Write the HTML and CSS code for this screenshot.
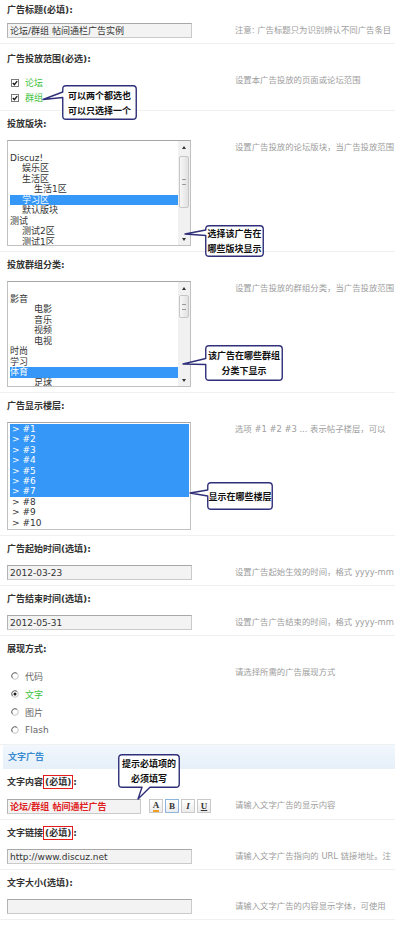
FILE: index.html
```html
<!DOCTYPE html>
<html lang="zh-CN">
<head>
<meta charset="utf-8">
<title>广告设置</title>
<link rel="stylesheet" href="styles.css">
</head>
<body>
<div class="page">

  <div class="row row--first">
    <div class="label">广告标题(必填):</div>
    <div class="field-row">
      <div class="field"><input class="input" type="text" value="论坛/群组 帖间通栏广告实例"></div>
      <div class="note">注意: 广告标题只为识别辨认不同广告条目</div>
    </div>
  </div>

  <div class="row row--checks">
    <div class="label">广告投放范围(必选):</div>
    <div class="field-row">
      <div class="field">
        <ul class="choices choices--check">
          <li class="choice"><svg class="mark" viewBox="0 0 8 8"><rect x=".5" y=".5" width="7" height="7" fill="#fff" stroke="#7a7a7a"/><path d="M1.8,3.9 L3.4,5.6 L6.2,2.1" stroke="#1e1e1e" stroke-width="1.4" fill="none"/></svg><span class="green">论坛</span></li>
          <li class="choice"><svg class="mark" viewBox="0 0 8 8"><rect x=".5" y=".5" width="7" height="7" fill="#fff" stroke="#7a7a7a"/><path d="M1.8,3.9 L3.4,5.6 L6.2,2.1" stroke="#1e1e1e" stroke-width="1.4" fill="none"/></svg><span class="green">群组</span></li>
        </ul>
      </div>
      <div class="note">设置本广告投放的页面或论坛范围</div>
    </div>
  </div>

  <div class="row">
    <div class="label">投放版块:</div>
    <div class="field-row">
      <div class="field">
        <div class="listbox listbox--forum">
          <div class="options">
            <div class="opt">&nbsp;</div>
            <div class="opt">Discuz!</div>
            <div class="opt l1">娱乐区</div>
            <div class="opt l1">生活区</div>
            <div class="opt l2">生活1区</div>
            <div class="opt l1 sel">学习区</div>
            <div class="opt l1">默认版块</div>
            <div class="opt">测试</div>
            <div class="opt l1">测试2区</div>
            <div class="opt l1">测试1区</div>
          </div>
          <div class="scrollbar">
            <div class="sb-arrow"></div>
            <div class="sb-gap sb-gap--forum"></div>
            <div class="sb-thumb sb-thumb--forum"></div>
            <div class="sb-space"></div>
            <div class="sb-arrow sb-arrow--down"></div>
          </div>
        </div>
      </div>
      <div class="note">设置广告投放的论坛版块，当广告投放范围</div>
    </div>
  </div>

  <div class="row">
    <div class="label">投放群组分类:</div>
    <div class="field-row">
      <div class="field">
        <div class="listbox listbox--group">
          <div class="options">
            <div class="opt">&nbsp;</div>
            <div class="opt">影音</div>
            <div class="opt l2">电影</div>
            <div class="opt l2">音乐</div>
            <div class="opt l2">视频</div>
            <div class="opt l2">电视</div>
            <div class="opt">时尚</div>
            <div class="opt">学习</div>
            <div class="opt sel">体育</div>
            <div class="opt l2">足球</div>
          </div>
          <div class="scrollbar">
            <div class="sb-arrow"></div>
            <div class="sb-gap sb-gap--group"></div>
            <div class="sb-thumb sb-thumb--group"></div>
            <div class="sb-space"></div>
            <div class="sb-arrow sb-arrow--down"></div>
          </div>
        </div>
      </div>
      <div class="note">设置广告投放的群组分类，当广告投放范围</div>
    </div>
  </div>

  <div class="row">
    <div class="label">广告显示楼层:</div>
    <div class="field-row">
      <div class="field">
        <div class="listbox listbox--floor">
          <div class="options options--floor">
            <div class="opt sel">&gt; #1</div>
            <div class="opt sel">&gt; #2</div>
            <div class="opt sel">&gt; #3</div>
            <div class="opt sel">&gt; #4</div>
            <div class="opt sel">&gt; #5</div>
            <div class="opt sel">&gt; #6</div>
            <div class="opt sel">&gt; #7</div>
            <div class="opt">&gt; #8</div>
            <div class="opt">&gt; #9</div>
            <div class="opt">&gt; #10</div>
          </div>
        </div>
      </div>
      <div class="note">选项 #1 #2 #3 ... 表示帖子楼层，可以</div>
    </div>
  </div>

  <div class="row">
    <div class="label">广告起始时间(选填):</div>
    <div class="field-row">
      <div class="field"><input class="input" type="text" value="2012-03-23"></div>
      <div class="note">设置广告起始生效的时间，格式 yyyy-mm</div>
    </div>
  </div>

  <div class="row">
    <div class="label">广告结束时间(选填):</div>
    <div class="field-row">
      <div class="field"><input class="input" type="text" value="2012-05-31"></div>
      <div class="note">设置广告广告结束的时间，格式 yyyy-mm</div>
    </div>
  </div>

  <div class="row">
    <div class="label">展现方式:</div>
    <div class="field-row">
      <div class="field">
        <ul class="choices choices--radio">
          <li class="choice"><svg class="mark" viewBox="0 0 8 8"><circle cx="4" cy="4" r="3.3" fill="#fff" stroke="#c4c4c4"/><path d="M1.3,5.9 A3.3,3.3 0 0 1 5.9,1.3" stroke="#6a6a6a" fill="none"/></svg><span>代码</span></li>
          <li class="choice"><svg class="mark" viewBox="0 0 8 8"><circle cx="4" cy="4" r="3.3" fill="#fff" stroke="#c4c4c4"/><path d="M1.3,5.9 A3.3,3.3 0 0 1 5.9,1.3" stroke="#6a6a6a" fill="none"/><circle cx="4" cy="4" r="1.5" fill="#1e1e1e"/></svg><span class="green">文字</span></li>
          <li class="choice"><svg class="mark" viewBox="0 0 8 8"><circle cx="4" cy="4" r="3.3" fill="#fff" stroke="#c4c4c4"/><path d="M1.3,5.9 A3.3,3.3 0 0 1 5.9,1.3" stroke="#6a6a6a" fill="none"/></svg><span>图片</span></li>
          <li class="choice"><svg class="mark" viewBox="0 0 8 8"><circle cx="4" cy="4" r="3.3" fill="#fff" stroke="#c4c4c4"/><path d="M1.3,5.9 A3.3,3.3 0 0 1 5.9,1.3" stroke="#6a6a6a" fill="none"/></svg><span>Flash</span></li>
        </ul>
      </div>
      <div class="note">请选择所需的广告展现方式</div>
    </div>
  </div>

  <div class="section-head">文字广告</div>

  <div class="row">
    <div class="label">文字内容<span class="req">(必填)</span>:</div>
    <div class="field-row">
      <div class="field editor">
        <input class="input input--short" type="text" value="论坛/群组 帖间通栏广告">
        <div class="tools">
          <span class="tool"><span class="tool-a">A</span></span>
          <span class="tool tool--on">B</span>
          <span class="tool tool--i">I</span>
          <span class="tool tool--u">U</span>
        </div>
      </div>
      <div class="note">请输入文字广告的显示内容</div>
    </div>
  </div>

  <div class="row">
    <div class="label">文字链接<span class="req">(必填)</span>:</div>
    <div class="field-row">
      <div class="field"><input class="input" type="text" value="http://www.discuz.net"></div>
      <div class="note">请输入文字广告指向的 URL 链接地址。注</div>
    </div>
  </div>

  <div class="row">
    <div class="label">文字大小(选填):</div>
    <div class="field-row">
      <div class="field"><input class="input" type="text" value=""></div>
      <div class="note">请输入文字广告的内容显示字体，可使用</div>
    </div>
  </div>

  <div class="callout callout--1">
    <svg class="bubble" width="75" height="35" viewBox="0 0 75 35"><path d="M4,.75 H71 Q74.25,.75 74.25,4 V31 Q74.25,34.25 71,34.25 H4 Q.75,34.25 .75,31 V12.5 L-19,14.5 L.75,7 V4 Q.75,.75 4,.75 Z"/></svg>
    <div class="callout-text"><span>可以两个都选也</span><span>可以只选择一个</span></div>
  </div>

  <div class="callout callout--2">
    <svg class="bubble" width="59" height="32" viewBox="0 0 59 32"><path d="M4,.75 H55 Q58.25,.75 58.25,4 V28 Q58.25,31.25 55,31.25 H4 Q.75,31.25 .75,28 V10.5 L-20,9 L.75,5 V4 Q.75,.75 4,.75 Z"/></svg>
    <div class="callout-text"><span>选择该广告在</span><span>哪些版块显示</span></div>
  </div>

  <div class="callout callout--3">
    <svg class="bubble" width="78" height="36" viewBox="0 0 78 36"><path d="M4,.75 H74 Q77.25,.75 77.25,4 V32 Q77.25,35.25 74,35.25 H4 Q.75,35.25 .75,32 V19.5 L-22,19 L.75,13.5 V4 Q.75,.75 4,.75 Z"/></svg>
    <div class="callout-text"><span>该广告在哪些群组</span><span>分类下显示</span></div>
  </div>

  <div class="callout callout--4">
    <svg class="bubble" width="66" height="28" viewBox="0 0 66 28"><path d="M4,.75 H62 Q65.25,.75 65.25,4 V24 Q65.25,27.25 62,27.25 H4 Q.75,27.25 .75,24 V14 L-17,11 L.75,8 V4 Q.75,.75 4,.75 Z"/></svg>
    <div class="callout-text"><span>显示在哪些楼层</span></div>
  </div>

  <div class="callout callout--5">
    <svg class="bubble" width="62" height="34" viewBox="0 0 62 34"><path d="M4,.75 H58 Q61.25,.75 61.25,4 V30 Q61.25,33.25 58,33.25 H32 L20,45 L24,33.25 H4 Q.75,33.25 .75,30 V4 Q.75,.75 4,.75 Z"/></svg>
    <div class="callout-text"><span>提示必填项的</span><span>必须填写</span></div>
  </div>

</div>
</body>
</html>
```

FILE: styles.css
```css
* {
  box-sizing: border-box;
}

html,
body {
  margin: 0;
  padding: 0;
  background: #fff;
}

body {
  width: 395px;
  height: 925px;
  overflow: hidden;
  font-family: "DejaVu Sans", "Noto Sans CJK SC", sans-serif;
  font-size: 9px;
  color: #333;
}

.page {
  position: relative;
}

/* rows */
.row {
  padding: 5px 0 5px 7px;
  border-bottom: 1px solid #f0f0f0;
}

.row--first {
  padding-top: 2px;
}

.row--first .label {
  margin-bottom: 5px;
}

.row--checks {
  padding-top: 7px;
}

.row--checks .label {
  margin-bottom: 6px;
}

.label {
  height: 16px;
  line-height: 16px;
  margin-bottom: 8px;
  font-weight: bold;
  color: #333;
  white-space: nowrap;
}

.req {
  border: 1px solid #e31b1b;
  padding: 1px 1px;
}

.field-row {
  display: flex;
  align-items: flex-start;
}

.field {
  width: 228px;
  flex: none;
}

.note {
  font-size: 8.4px;
  line-height: 15px;
  color: #9d9d9d;
  white-space: nowrap;
}

/* text inputs */
.input {
  display: block;
  width: 185px;
  height: 15px;
  margin: 0;
  padding: 0 2px;
  border: 1px solid #cacaca;
  border-top-color: #a8a8a8;
  border-left-color: #b4b4b4;
  background: #f3f3f3;
  font-family: "DejaVu Sans", "Noto Sans CJK SC", sans-serif;
  font-size: 9px;
  color: #333;
  outline: none;
}

.input--short {
  width: 134px;
  color: #e01f1f;
  font-weight: bold;
}

/* checkbox / radio lists */
.choices {
  list-style: none;
  margin: 2px 0 0;
  padding: 0;
}

.choice {
  display: flex;
  align-items: center;
  gap: 6px;
  height: 15px;
  padding-left: 4px;
  color: #666;
}

.choices--radio .choice {
  height: 18px;
}

.mark {
  width: 8px;
  height: 8px;
  flex: none;
}

.green {
  color: #3cc23c;
}

/* list boxes */
.listbox {
  display: flex;
  width: 184px;
  border: 1px solid #c0c0c0;
  border-top-color: #a6a6a6;
  background: #fff;
}

.listbox--forum,
.listbox--group {
  height: 106px;
}

.listbox--floor {
  height: 108px;
}

.options {
  flex: 1;
  padding: 1px 0 0 2px;
  overflow: hidden;
}

.options--floor {
  padding: 1px 1px 0 2px;
}

.options--floor .opt {
  height: 10.4px;
  line-height: 10.4px;
  padding-left: 2px;
}

.opt {
  height: 10.5px;
  line-height: 10.5px;
  white-space: nowrap;
  color: #333;
}

.opt.sel {
  background: #3597f8;
  color: #fff;
}

.opt.l1 {
  padding-left: 12px;
}

.opt.l2 {
  padding-left: 24px;
}

.scrollbar {
  width: 12px;
  flex: none;
  display: flex;
  flex-direction: column;
  background: #f1f1f1;
}

.sb-arrow {
  height: 12px;
  flex: none;
  display: flex;
  align-items: center;
  justify-content: center;
}

.sb-arrow::before {
  content: "";
  border-left: 2.5px solid transparent;
  border-right: 2.5px solid transparent;
  border-bottom: 3px solid #333;
}

.sb-arrow--down::before {
  border-bottom: 0;
  border-top: 3px solid #333;
}

.sb-gap--forum {
  height: 3px;
}

.sb-gap--group {
  height: 1px;
}

.sb-thumb {
  margin: 0 1px;
  flex: none;
  border: 1px solid #c6c6c6;
  border-radius: 2px;
  background: linear-gradient(to right, #f7f7f7, #e1e1e1);
  display: flex;
  align-items: center;
  justify-content: center;
}

.sb-thumb::after {
  content: "";
  width: 4px;
  height: 4px;
  border-top: 1px solid #9a9a9a;
  border-bottom: 1px solid #9a9a9a;
}

.sb-thumb--forum {
  height: 52px;
}

.sb-thumb--group {
  height: 23px;
}

.sb-space {
  flex: 1;
}

/* section header */
.section-head {
  height: 24px;
  line-height: 24px;
  margin-left: 3px;
  padding-left: 5px;
  background: linear-gradient(#f1f7fc, #e6f0f9);
  color: #3a8bd2;
  font-weight: bold;
}

/* text editor buttons */
.editor {
  display: flex;
  align-items: center;
  height: 16px;
}

.tools {
  display: flex;
  gap: 2px;
  margin-left: 8px;
}

.tool {
  width: 14px;
  height: 14px;
  border: 1px solid #c9c9c9;
  background: linear-gradient(#ffffff, #ebebeb);
  display: flex;
  align-items: center;
  justify-content: center;
  font-family: "Liberation Serif", serif;
  font-weight: bold;
  font-size: 9px;
  color: #333;
}

.tool--on {
  border-color: #8fb4de;
}

.tool--i {
  font-style: italic;
}

.tool--u {
  text-decoration: underline;
}

.tool-a {
  line-height: 9px;
  border-bottom: 2px solid #f2a024;
}

/* callouts */
.callout {
  position: absolute;
}

.bubble {
  position: absolute;
  left: 0;
  top: 0;
  overflow: visible;
}

.bubble path {
  fill: #fff;
  stroke: #30307a;
  stroke-width: 1.4;
  stroke-linejoin: round;
}

.callout-text {
  position: absolute;
  inset: 0;
  display: flex;
  flex-direction: column;
  align-items: center;
  justify-content: center;
  font-family: "Noto Sans CJK SC", sans-serif;
  font-weight: bold;
  font-size: 9px;
  line-height: 15px;
  color: #111;
  white-space: nowrap;
}

.callout--1 {
  left: 62px;
  top: 85px;
  width: 75px;
  height: 35px;
}

.callout--2 {
  left: 205px;
  top: 225px;
  width: 59px;
  height: 32px;
}

.callout--3 {
  left: 205px;
  top: 345px;
  width: 78px;
  height: 36px;
}

.callout--4 {
  left: 207px;
  top: 482px;
  width: 66px;
  height: 28px;
}

.callout--5 {
  left: 118px;
  top: 754px;
  width: 62px;
  height: 34px;
}
```
